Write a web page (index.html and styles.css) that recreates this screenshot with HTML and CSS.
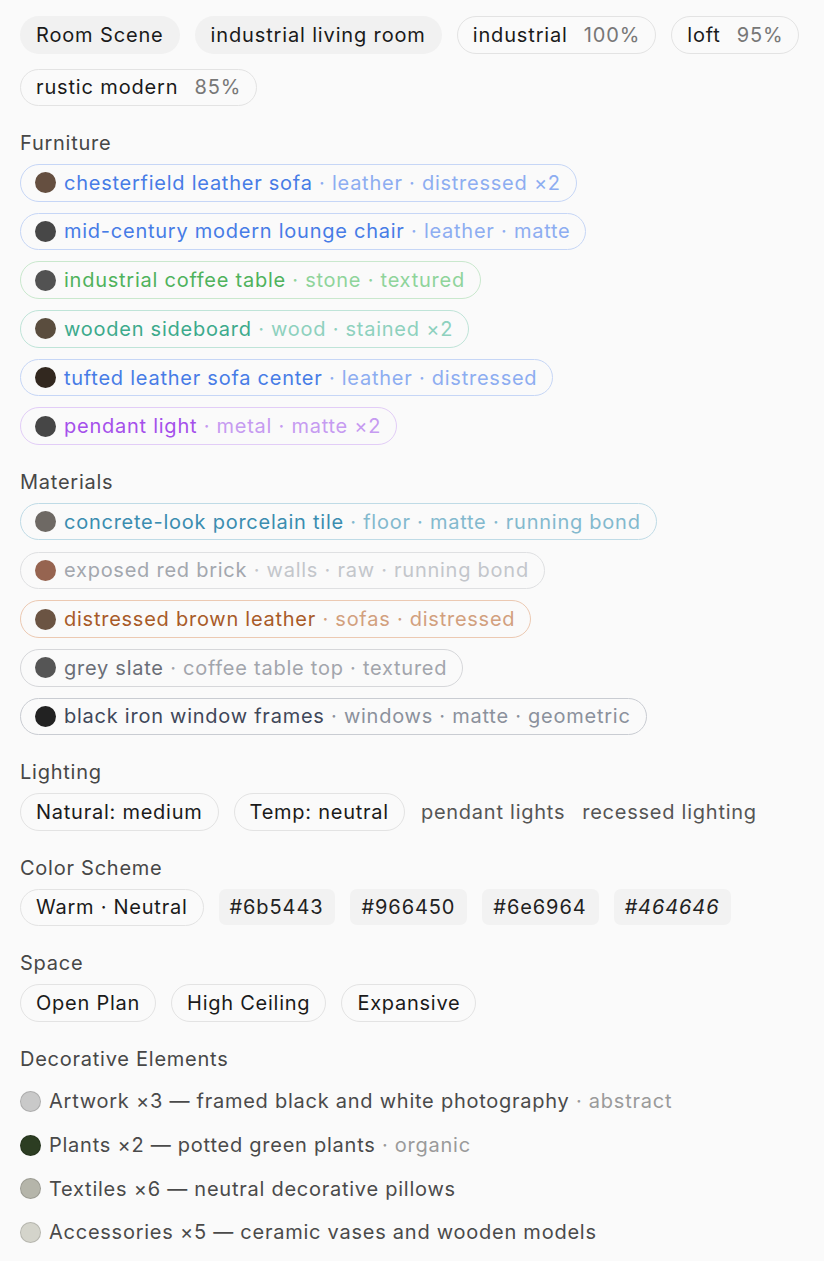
FILE: index.html
```html
<!DOCTYPE html>
<html lang="en">
<head>
<meta charset="utf-8">
<title>Room Scene</title>
<link rel="stylesheet" href="styles.css">
</head>
<body>
<main class="page">
  <div class="row row-top">
    <span class="chip chip-filled">Room Scene</span>
    <span class="chip chip-filled">industrial living room</span>
    <span class="chip chip-outline">industrial<span class="pct">100%</span></span>
    <span class="chip chip-outline">loft<span class="pct">95%</span></span>
    <span class="chip chip-outline">rustic modern<span class="pct">85%</span></span>
  </div>

  <section class="section">
    <h2 class="heading">Furniture</h2>
    <div class="stack">
      <div class="item blue"><span class="dot" style="background:#654f40"></span><span class="name">chesterfield leather sofa</span><span class="meta"> · leather · distressed ×2</span></div>
      <div class="item blue"><span class="dot" style="background:#474747"></span><span class="name">mid-century modern lounge chair</span><span class="meta"> · leather · matte</span></div>
      <div class="item green"><span class="dot" style="background:#525252"></span><span class="name">industrial coffee table</span><span class="meta"> · stone · textured</span></div>
      <div class="item teal"><span class="dot" style="background:#5a4d3e"></span><span class="name">wooden sideboard</span><span class="meta"> · wood · stained ×2</span></div>
      <div class="item blue"><span class="dot" style="background:#32281f"></span><span class="name">tufted leather sofa center</span><span class="meta"> · leather · distressed</span></div>
      <div class="item purple"><span class="dot" style="background:#464646"></span><span class="name">pendant light</span><span class="meta"> · metal · matte ×2</span></div>
    </div>
  </section>

  <section class="section">
    <h2 class="heading">Materials</h2>
    <div class="stack">
      <div class="item cyan"><span class="dot" style="background:#6e6964"></span><span class="name">concrete-look porcelain tile</span><span class="meta"> · floor · matte · running bond</span></div>
      <div class="item faint"><span class="dot" style="background:#966450"></span><span class="name">exposed red brick</span><span class="meta"> · walls · raw · running bond</span></div>
      <div class="item brown"><span class="dot" style="background:#6b5443"></span><span class="name">distressed brown leather</span><span class="meta"> · sofas · distressed</span></div>
      <div class="item grey"><span class="dot" style="background:#555555"></span><span class="name">grey slate</span><span class="meta"> · coffee table top · textured</span></div>
      <div class="item slate"><span class="dot" style="background:#222222"></span><span class="name">black iron window frames</span><span class="meta"> · windows · matte · geometric</span></div>
    </div>
  </section>

  <section class="section">
    <h2 class="heading">Lighting</h2>
    <div class="row">
      <span class="chip chip-outline">Natural: medium</span>
      <span class="chip chip-outline">Temp: neutral</span>
      <span class="plain">pendant lights</span>
      <span class="plain">recessed lighting</span>
    </div>
  </section>

  <section class="section">
    <h2 class="heading">Color Scheme</h2>
    <div class="row">
      <span class="chip chip-outline">Warm · Neutral</span>
      <span class="hex">#6b5443</span>
      <span class="hex">#966450</span>
      <span class="hex">#6e6964</span>
      <span class="hex hex-italic">#464646</span>
    </div>
  </section>

  <section class="section">
    <h2 class="heading">Space</h2>
    <div class="row">
      <span class="chip chip-outline">Open Plan</span>
      <span class="chip chip-outline">High Ceiling</span>
      <span class="chip chip-outline">Expansive</span>
    </div>
  </section>

  <section class="section">
    <h2 class="heading">Decorative Elements</h2>
    <ul class="deco">
      <li class="deco-row"><span class="ring" style="background:#c9c9c9"></span><span>Artwork ×3 — framed black and white photography</span><span class="deco-meta"> · abstract</span></li>
      <li class="deco-row"><span class="ring" style="background:#2c3d22"></span><span>Plants ×2 — potted green plants</span><span class="deco-meta"> · organic</span></li>
      <li class="deco-row"><span class="ring" style="background:#b5b5aa"></span><span>Textiles ×6 — neutral decorative pillows</span></li>
      <li class="deco-row"><span class="ring" style="background:#d4d4cb"></span><span>Accessories ×5 — ceramic vases and wooden models</span></li>
    </ul>
  </section>
</main>
</body>
</html>
```

FILE: styles.css
```css
* { box-sizing: border-box; }

html, body {
  margin: 0;
  padding: 0;
  background: #fafafa;
}

body {
  font-family: Inter, "Noto Sans", "Liberation Sans", sans-serif;
  font-size: 20px;
  line-height: 24px;
  letter-spacing: 0.75px;
  color: #1a1a1a;
}

.page {
  padding: 16px 20px 20px 20px;
}

.row {
  display: flex;
  flex-wrap: wrap;
  align-items: center;
  gap: 15px 15px;
}

.row-top .chip {
  letter-spacing: 0.85px;
}

.chip {
  display: inline-flex;
  align-items: center;
  padding: 5.75px 15px;
  border: 1px solid transparent;
  border-radius: 999px;
  white-space: nowrap;
  color: #1a1a1a;
}

.chip-filled {
  background: #f1f1f1;
}

.chip-outline {
  border-color: #e3e3e3;
}

.pct {
  margin-left: 16px;
  color: #777777;
}

.plain {
  color: #555555;
  padding: 0 1px;
}

.hex {
  display: inline-block;
  padding: 6px 12px 6px 11px;
  border-radius: 7px;
  background: #f2f2f2;
  color: #222222;
  letter-spacing: 0.9px;
}

.hex-italic {
  font-style: italic;
}

.section {
  margin-top: 25px;
}

.heading {
  margin: 0 0 9px 0;
  font-size: 20px;
  line-height: 24px;
  font-weight: 400;
  color: #474747;
}

.stack {
  display: flex;
  flex-direction: column;
  align-items: flex-start;
  gap: 11.2px;
}

.item {
  display: inline-flex;
  align-items: center;
  padding: 5.75px 15px 5.75px 14px;
  border: 1px solid #ccc;
  border-radius: 999px;
  white-space: pre;
}

.dot {
  width: 21px;
  height: 21px;
  border-radius: 50%;
  margin-right: 8px;
  flex: none;
}

.blue { border-color: #c6d6f6; }
.blue .name { color: #477ce6; }
.blue .meta { color: #8dadf1; }

.green { border-color: #c9e8cd; }
.green .name { color: #4fb25c; }
.green .meta { color: #8fd49b; }

.teal { border-color: #bfe4d8; }
.teal .name { color: #3daa8c; }
.teal .meta { color: #8ed1be; }

.purple { border-color: #e2cdf7; }
.purple .name { color: #a550eb; }
.purple .meta { color: #c69bf1; }

.cyan { border-color: #bfdbe6; }
.cyan .name { color: #3b8db0; }
.cyan .meta { color: #83b9ce; }

.faint { border-color: #dfe0e2; }
.faint .name { color: #a3a7ae; }
.faint .meta { color: #c3c6cb; }

.brown { border-color: #ecc9b2; }
.brown .name { color: #a85a28; }
.brown .meta { color: #d2a07e; }

.grey { border-color: #d6d7da; }
.grey .name { color: #6a6e77; }
.grey .meta { color: #a2a5ac; }

.slate { border-color: #c9ccd2; }
.slate .name { color: #3f4759; }
.slate .meta { color: #8b919c; }

.deco {
  list-style: none;
  margin: 0;
  padding: 0;
}

.deco-row {
  display: flex;
  align-items: center;
  padding: 9.8px 0;
  color: #4a4a4a;
  white-space: pre;
}

.ring {
  width: 21px;
  height: 21px;
  border-radius: 50%;
  margin-right: 8px;
  border: 1px solid rgba(0, 0, 0, 0.14);
  flex: none;
}

.deco-meta {
  color: #9a9a9a;
}
```
